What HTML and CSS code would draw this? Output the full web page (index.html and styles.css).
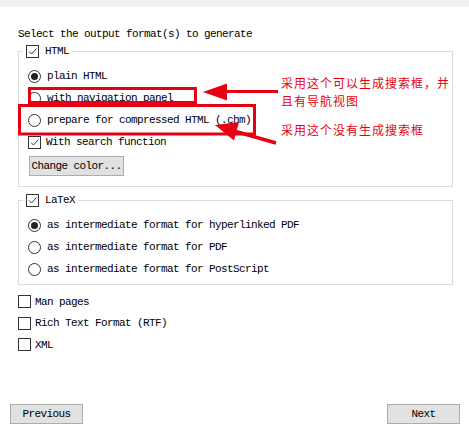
FILE: index.html
```html
<!DOCTYPE html>
<html>
<head>
<meta charset="utf-8">
<link rel="stylesheet" href="styles.css">
</head>
<body>
<div class="page">
  <div class="topbar"></div>
  <div class="content">
    <p class="intro">Select the output format(s) to generate</p>

    <div class="group">
      <div class="legend">
        <span class="cb"><svg viewBox="0 0 11 11" width="11" height="11"><path d="M2 5.5 L4.5 8 L9.5 2.5" fill="none" stroke="#333" stroke-width="1"/></svg></span>
        <span class="label">HTML</span>
      </div>
      <div class="row"><span class="radio on"></span><span class="label">plain HTML</span></div>
      <div class="row"><span class="radio"></span><span class="label">with navigation panel</span></div>
      <div class="row"><span class="radio"></span><span class="label">prepare for compressed HTML (.chm)</span></div>
      <div class="row"><span class="cb"><svg viewBox="0 0 11 11" width="11" height="11"><path d="M2 5.5 L4.5 8 L9.5 2.5" fill="none" stroke="#333" stroke-width="1"/></svg></span><span class="label tight">With search function</span></div>
      <button class="btn color-btn">Change color...</button>
    </div>

    <div class="group latex">
      <div class="legend">
        <span class="cb"><svg viewBox="0 0 11 11" width="11" height="11"><path d="M2 5.5 L4.5 8 L9.5 2.5" fill="none" stroke="#333" stroke-width="1"/></svg></span>
        <span class="label">LaTeX</span>
      </div>
      <div class="row"><span class="radio on"></span><span class="label">as intermediate format for hyperlinked PDF</span></div>
      <div class="row"><span class="radio"></span><span class="label">as intermediate format for PDF</span></div>
      <div class="row"><span class="radio"></span><span class="label">as intermediate format for PostScript</span></div>
    </div>

    <div class="checks">
      <div class="crow"><span class="cb"></span><span class="label">Man pages</span></div>
      <div class="crow"><span class="cb"></span><span class="label">Rich Text Format (RTF)</span></div>
      <div class="crow"><span class="cb"></span><span class="label">XML</span></div>
    </div>
  </div>

  <div class="footer">
    <button class="btn nav-btn">Previous</button>
    <button class="btn nav-btn">Next</button>
  </div>

  <svg class="annot" width="469" height="430" viewBox="0 0 469 430">
    <rect x="29.5" y="88.5" width="166" height="14" fill="none" stroke="#e60012" stroke-width="3"/>
    <rect x="19.5" y="105.5" width="235" height="28.5" fill="none" stroke="#e60012" stroke-width="3"/>
    <line x1="222" y1="91.5" x2="278" y2="91.5" stroke="#e60012" stroke-width="3"/>
    <polygon points="203,92 227,83.5 227,100.5" fill="#e60012"/>
    <line x1="276" y1="143" x2="234" y2="131" stroke="#e60012" stroke-width="3.5"/>
    <polygon points="215,125 239,122 234,140.5" fill="#e60012"/>
  </svg>
  <div class="note note-a"><span class="line">采用这个可以生成搜索框，并</span><span class="line">且有导航视图</span></div>
  <div class="note note-b"><span class="line">采用这个没有生成搜索框</span></div>
</div>
</body>
</html>
```

FILE: styles.css
```css
* { box-sizing: border-box; }
html, body { margin: 0; padding: 0; background: #fff; }
body {
  font-family: "Liberation Mono", "DejaVu Sans Mono", monospace;
  font-size: 11px;
  letter-spacing: -0.6px;
  color: #000;
}
.page {
  position: relative;
  width: 469px;
  height: 430px;
  display: flex;
  flex-direction: column;
  overflow: hidden;
}
.topbar {
  height: 7px;
  background: #f0f0f0;
  flex: none;
}
.content {
  padding: 20px 16px 0 18px;
}
.intro {
  margin: 0;
  height: 14px;
  line-height: 14px;
}
.group {
  margin-top: 10px;
  border: 1px solid #dcdcdc;
  padding: 0 0 10px 9px;
}
.group.latex {
  margin-top: 13px;
  padding-bottom: 4px;
}
.legend {
  display: flex;
  align-items: center;
  width: fit-content;
  height: 14px;
  margin: -8px 0 7px -5px;
  padding: 0 3px;
  background: #fff;
}
.legend .label { margin-left: 6px; }
.row {
  display: flex;
  align-items: center;
  height: 22px;
}
.row .label { margin-left: 6px; }
.row .label.tight { margin-left: 5px; }
.cb {
  width: 13px;
  height: 13px;
  border: 1px solid #333;
  background: #fff;
  display: flex;
  align-items: center;
  justify-content: center;
  flex: none;
}
.radio {
  width: 13px;
  height: 13px;
  border: 1px solid #333;
  border-radius: 50%;
  background: #fff;
  display: flex;
  align-items: center;
  justify-content: center;
  flex: none;
}
.radio.on::after {
  content: "";
  width: 7px;
  height: 7px;
  border-radius: 50%;
  background: #222;
}
.btn {
  font-family: inherit;
  font-size: 11px;
  letter-spacing: -0.6px;
  color: #000;
  background: #e1e1e1;
  border: 1px solid #adadad;
  height: 20px;
  padding: 0;
  margin: 0;
}
.color-btn {
  width: 95px;
  margin: 3px 0 0 1px;
  display: block;
}
.checks {
  margin-top: 6px;
}
.crow {
  display: flex;
  align-items: center;
  height: 21.5px;
}
.crow .label { margin-left: 4px; }
.footer {
  margin-top: auto;
  display: flex;
  justify-content: space-between;
  padding: 0 9px 6px 10px;
}
.nav-btn { width: 73px; }
.annot {
  position: absolute;
  left: 0;
  top: 0;
  pointer-events: none;
}
.note {
  position: absolute;
  left: 281px;
  display: flex;
  flex-direction: column;
  font-family: "Noto Sans CJK SC", sans-serif;
  font-size: 12px;
  line-height: 17.5px;
  letter-spacing: 1px;
  color: #e60012;
}
.note .line { display: block; height: 17.5px; white-space: nowrap; }
.note-a { top: 74px; }
.note-b { top: 121px; }
```
